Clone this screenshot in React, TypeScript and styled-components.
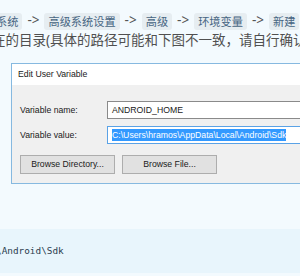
import styled, { createGlobalStyle } from 'styled-components';

const GlobalStyle = createGlobalStyle`
  html, body {
    margin: 0;
    padding: 0;
    background: #f3fafe;
    overflow: hidden;
  }
  body {
    width: 300px;
    height: 276px;
  }
`;

const Article = styled.div`
  padding-top: 10px;
  font-family: 'Noto Sans', 'Noto Sans CJK SC', sans-serif;
  color: #505050;
`;

const Line = styled.div`
  margin-left: -8px;
  height: 20px;
  line-height: 20px;
  font-size: 13.5px;
  white-space: nowrap;
`;

const Arrow = styled.span`
  margin: 0 5px;
  color: #555;
`;

const Chip = styled.code`
  display: inline-block;
  height: 17px;
  line-height: 17px;
  padding: 0 4px;
  vertical-align: middle;
  border-radius: 3px;
  background: #e6edf1;
  color: #476582;
  font-family: 'Noto Sans CJK SC', sans-serif;
  font-size: 11.2px;
`;

const Dialog = styled.div`
  margin: 13px 0 0 11px;
  width: 320px;
  border: 1px solid #86b9e0;
  font-family: 'Liberation Sans', Arial, sans-serif;
  font-size: 8.7px;
  color: #1a1a1a;
`;

const TitleBar = styled.div`
  height: 21px;
  line-height: 21px;
  padding-left: 6px;
  background: #fff;
`;

const Body = styled.div`
  background: #f0f0f0;
  padding: 16px 0 9px 8px;
  display: flex;
  flex-direction: column;
  gap: 7px;
`;

const Row = styled.div`
  display: flex;
  align-items: center;
`;

const Label = styled.div`
  width: 87px;
`;

const Input = styled.div<{ $focused?: boolean }>`
  width: 200px;
  height: 16px;
  line-height: 16px;
  padding-left: 4px;
  background: #fff;
  border: 1px solid ${(p) => (p.$focused ? '#5aa2e6' : '#8a8a8a')};
  white-space: nowrap;
`;

const Selected = styled.span`
  display: inline-block;
  line-height: 12px;
  background: #3399ff;
  color: #fff;
`;

const Buttons = styled.div`
  display: flex;
  gap: 7px;
  margin-top: 4px;
`;

const Button = styled.div`
  width: 93px;
  height: 17px;
  line-height: 17px;
  text-align: center;
  background: #e1e1e1;
  border: 1px solid #adadad;
`;

const CodeBlock = styled.pre`
  margin: 45px 0 0;
  height: 44px;
  line-height: 44px;
  padding: 0;
  background: #e8f5fc;
  font-family: 'DejaVu Sans Mono', monospace;
  font-size: 9.4px;
  color: #2c3e50;
  white-space: nowrap;
  overflow: hidden;
`;

const CodeText = styled.span`
  margin-left: -4px;
`;

export default function App() {
  return (
    <>
      <GlobalStyle />
      <Article>
        <Line>
          <Chip>系统</Chip>
          <Arrow>-&gt;</Arrow>
          <Chip>高级系统设置</Chip>
          <Arrow>-&gt;</Arrow>
          <Chip>高级</Chip>
          <Arrow>-&gt;</Arrow>
          <Chip>环境变量</Chip>
          <Arrow>-&gt;</Arrow>
          <Chip>新建</Chip>
        </Line>
        <Line>在的目录(具体的路径可能和下图不一致，请自行确认）：</Line>
        <Dialog>
          <TitleBar>Edit User Variable</TitleBar>
          <Body>
            <Row>
              <Label>Variable name:</Label>
              <Input>ANDROID_HOME</Input>
            </Row>
            <Row>
              <Label>Variable value:</Label>
              <Input $focused>
                <Selected>C:\Users\hramos\AppData\Local\Android\Sdk</Selected>
              </Input>
            </Row>
            <Buttons>
              <Button>Browse Directory...</Button>
              <Button>Browse File...</Button>
            </Buttons>
          </Body>
        </Dialog>
        <CodeBlock>
          <CodeText>\Android\Sdk</CodeText>
        </CodeBlock>
      </Article>
    </>
  );
}
